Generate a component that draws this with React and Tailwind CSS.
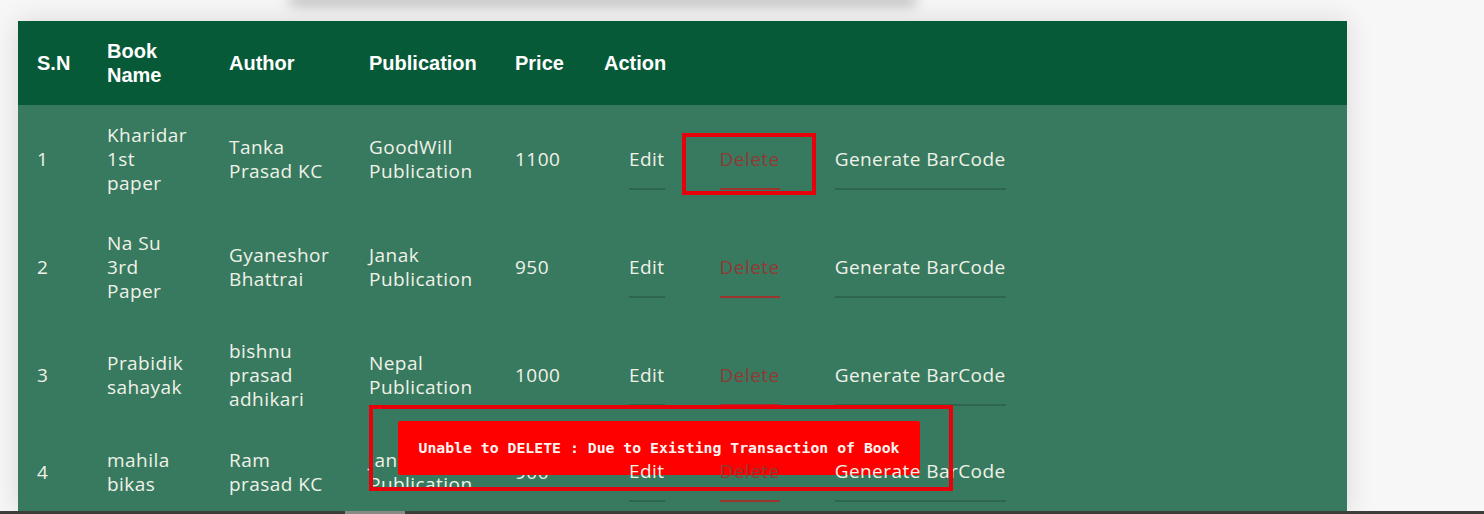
import React from 'react';

const books = [
    { sn: '1', name: ['Kharidar', '1st', 'paper'], author: ['Tanka', 'Prasad KC'], pub: ['GoodWill', 'Publication'], price: '1100' },
    { sn: '2', name: ['Na Su', '3rd', 'Paper'], author: ['Gyaneshor', 'Bhattrai'], pub: ['Janak', 'Publication'], price: '950' },
    { sn: '3', name: ['Prabidik', 'sahayak'], author: ['bishnu', 'prasad', 'adhikari'], pub: ['Nepal', 'Publication'], price: '1000' },
    { sn: '4', name: ['mahila', 'bikas'], author: ['Ram', 'prasad KC'], pub: ['Janak', 'Publication'], price: '900' },
];

const cols = 'grid grid-cols-[70px_122px_140px_146px_89px_1fr] items-center';

const Lines = ({ lines }) => (
    <div className="py-[18px] pl-[19px]">
        {lines.map((l) => (
            <div key={l} className="whitespace-nowrap leading-[24px]">{l}</div>
        ))}
    </div>
);

const BookRow = ({ book }) => (
    <div className={cols}>
        <Lines lines={[book.sn]} />
        <Lines lines={book.name} />
        <Lines lines={book.author} />
        <Lines lines={book.pub} />
        <Lines lines={[book.price]} />
        {/* Actions */}
        <div className="py-[12px] pl-[44px] flex gap-[55px]">
            <a className="relative z-20 inline-block pt-[18px] pb-[17px] leading-[24px] border-b-2 border-[#2d664d] cursor-pointer">Edit</a>
            <a className="relative z-20 inline-block pt-[18px] pb-[17px] leading-[24px] border-b-2 border-[#9b3530] text-[#8e3a35] cursor-pointer">Delete</a>
            <a className="relative z-20 inline-block pt-[18px] pb-[17px] leading-[24px] border-b-2 border-[#2d664d] whitespace-nowrap cursor-pointer">Generate BarCode</a>
        </div>
    </div>
);

export default function App() {
    return (
        <div className="relative h-[514px] flex flex-col overflow-hidden bg-[#f7f7f7]">
            <div className="flex-1 overflow-hidden">
                {/* card above, scrolled out of view */}
                <div className="ml-[290px] w-[626px] h-[6px] -mt-[6px] bg-white shadow-[0_3px_14px_rgba(0,0,0,0.45)]" />

                {/* Book table */}
                <div className="ml-[18px] mt-[21px] w-[1329px] bg-[#387a5f] shadow-[0_0_26px_rgba(0,0,0,0.13)] font-['Open_Sans',sans-serif] font-normal text-[19px] tracking-[0.45px] text-[#f0f2e8]">
                    <div className={`${cols} h-[84px] bg-[#065a38] text-white font-['Liberation_Sans',Arial,sans-serif] font-bold text-[20px] tracking-normal leading-[24px]`}>
                        <div className="pl-[19px]">S.N</div>
                        <div className="pl-[19px]">Book<br />Name</div>
                        <div className="pl-[19px]">Author</div>
                        <div className="pl-[19px]">Publication</div>
                        <div className="pl-[19px]">Price</div>
                        <div className="pl-[19px]">Action</div>
                    </div>
                    {books.map((b) => (
                        <BookRow key={b.sn} book={b} />
                    ))}
                </div>
            </div>

            {/* scrollbar */}
            <div className="h-[3px] bg-[#3a3f37]">
                <div className="ml-[345px] w-[60px] h-full bg-[#8a8a85]" />
            </div>

            {/* annotation boxes + toast */}
            <div className="absolute left-[682px] top-[133px] w-[134px] h-[62px] border-4 border-[#e8000a] z-30" />
            <div className="absolute left-[398px] top-[421px] w-[522px] h-[54px] rounded-[2px] bg-[#ff0000] z-10 flex items-center justify-center font-['DejaVu_Sans_Mono',monospace] font-bold text-[14.8px] text-[#fff4f0]">
                Unable to DELETE : Due to Existing Transaction of Book
            </div>
            <div className="absolute left-[369px] top-[405px] w-[584px] h-[86px] border-4 border-[#e8000a] z-30" />
        </div>
    );
}
